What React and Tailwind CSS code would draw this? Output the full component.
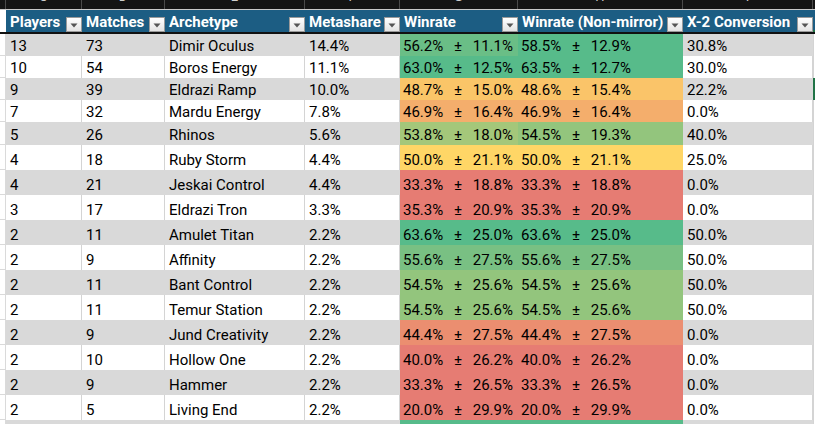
import React from 'react';

const rows = [
  { p: 13, m: 73, a: 'Dimir Oculus', s: '14.4%', w: [56.2, 11.1], n: [58.5, 12.9], x: '30.8%', h: 'h-[22px]' },
  { p: 10, m: 54, a: 'Boros Energy', s: '11.1%', w: [63.0, 12.5], n: [63.5, 12.7], x: '30.0%', h: 'h-[22px]' },
  { p: 9, m: 39, a: 'Eldrazi Ramp', s: '10.0%', w: [48.7, 15.0], n: [48.6, 15.4], x: '22.2%', h: 'h-[22px]', sel: true },
  { p: 7, m: 32, a: 'Mardu Energy', s: '7.8%', w: [46.9, 16.4], n: [46.9, 16.4], x: '0.0%', h: 'h-[22px]' },
  { p: 5, m: 26, a: 'Rhinos', s: '5.6%', w: [53.8, 18.0], n: [54.5, 19.3], x: '40.0%', h: 'h-[23px]' },
  { p: 4, m: 18, a: 'Ruby Storm', s: '4.4%', w: [50.0, 21.1], n: [50.0, 21.1], x: '25.0%', h: 'h-[25px]' },
  { p: 4, m: 21, a: 'Jeskai Control', s: '4.4%', w: [33.3, 18.8], n: [33.3, 18.8], x: '0.0%', h: 'h-[25px]' },
  { p: 3, m: 17, a: 'Eldrazi Tron', s: '3.3%', w: [35.3, 20.9], n: [35.3, 20.9], x: '0.0%', h: 'h-[25px]' },
  { p: 2, m: 11, a: 'Amulet Titan', s: '2.2%', w: [63.6, 25.0], n: [63.6, 25.0], x: '50.0%', h: 'h-[25px]' },
  { p: 2, m: 9, a: 'Affinity', s: '2.2%', w: [55.6, 27.5], n: [55.6, 27.5], x: '50.0%', h: 'h-[25px]' },
  { p: 2, m: 11, a: 'Bant Control', s: '2.2%', w: [54.5, 25.6], n: [54.5, 25.6], x: '50.0%', h: 'h-[25px]' },
  { p: 2, m: 11, a: 'Temur Station', s: '2.2%', w: [54.5, 25.6], n: [54.5, 25.6], x: '50.0%', h: 'h-[25px]' },
  { p: 2, m: 9, a: 'Jund Creativity', s: '2.2%', w: [44.4, 27.5], n: [44.4, 27.5], x: '0.0%', h: 'h-[25px]' },
  { p: 2, m: 10, a: 'Hollow One', s: '2.2%', w: [40.0, 26.2], n: [40.0, 26.2], x: '0.0%', h: 'h-[25px]' },
  { p: 2, m: 9, a: 'Hammer', s: '2.2%', w: [33.3, 26.5], n: [33.3, 26.5], x: '0.0%', h: 'h-[25px]' },
  { p: 2, m: 5, a: 'Living End', s: '2.2%', w: [20.0, 29.9], n: [20.0, 29.9], x: '0.0%', h: 'h-[25px]' },
  { p: '', m: '', a: '', s: '', w: [70, null], n: [70, null], x: '', h: 'h-[25px]' },
];

// google-sheets style scale: red / yellow / green around 50%
const RED = [230, 124, 115];
const YEL = [255, 214, 102];
const GRN = [87, 187, 138];
const scale = (v) => {
  const t = Math.max(-1, Math.min(1, (v - 50) / 7));
  const to = t < 0 ? RED : GRN;
  const k = Math.abs(t);
  return `rgb(${YEL.map((c, i) => Math.round(c + (to[i] - c) * k)).join(',')})`;
};

const Dropdown = () => (
  <div className="w-[16px] h-[15px] shrink-0 border border-[#9a9a9a] bg-gradient-to-b from-white to-[#e4e4e4] flex items-center justify-center">
    <svg width="8" height="5" viewBox="0 0 8 5" className="mt-[1px]">
      <path d="M0.5 0.5 L7.5 0.5 L4 4.5 Z" fill="#555" />
    </svg>
  </div>
);

const HeadCell = ({ w, label, last }) => (
  <div className={`${w} flex items-end justify-between pl-[4px] ${last ? 'pr-[1px]' : ''}`}>
    <span className="text-white font-bold text-[15px] leading-[17px] pb-[1px] whitespace-nowrap">{label}</span>
    <Dropdown />
  </div>
);

const Cell = ({ w, gray, children }) => (
  <div
    className={`${w} flex items-end pl-[4px] pb-[1px] leading-[17px] border-r ${
      gray ? 'border-[#d9d9d9]' : 'border-[#d4d4d4]'
    } whitespace-nowrap`}
  >
    {children}
  </div>
);

const Rate = ({ w, pair }) => (
  <div className={`${w} flex items-end pb-[1px] leading-[17px]`} style={{ backgroundColor: scale(pair[0]) }}>
    {pair[1] !== null && (
      <div className="flex w-[113px] pl-[3px]">
        <span className="w-[46px]">{pair[0].toFixed(1)}%</span>
        <span className="w-[18px] text-center">±</span>
        <span className="w-[46px] text-right">{pair[1].toFixed(1)}%</span>
      </div>
    )}
  </div>
);

const letters = [
  { w: 'w-[6px]', l: '' },
  { w: 'w-[76px]', l: 'C' },
  { w: 'w-[83px]', l: 'D' },
  { w: 'w-[140px]', l: 'E' },
  { w: 'w-[95px]', l: 'F' },
  { w: 'w-[118px]', l: 'G' },
  { w: 'w-[165px]', l: 'H' },
  { w: 'w-[130px]', l: 'I' },
];

export default function App() {
  return (
    <div className="w-[815px] h-[424px] overflow-hidden bg-white font-['Roboto',sans-serif] text-[15px] text-black">
      {/* column letters, mostly scrolled out of view */}
      <div className="flex h-[10px] bg-[#141414] border-b border-[#c8c8c8]">
        {letters.map((c, i) => (
          <div
            key={i}
            className={`${c.w} h-[9px] overflow-hidden flex items-end justify-center border-r border-[#4a4a4a]`}
          >
            <span className="text-[13px] leading-[13px] mb-[6px] text-[#cfcfcf]">{c.l}</span>
          </div>
        ))}
        <div className="flex-1" />
      </div>

      {/* table header */}
      <div className="flex h-[24px] border-b-2 border-[#111]">
        <div className="w-[6px] bg-white" />
        <div className="flex flex-1 bg-[#1c5d83]">
          <HeadCell w="w-[76px]" label="Players" />
          <HeadCell w="w-[83px]" label="Matches" />
          <HeadCell w="w-[140px]" label="Archetype" />
          <HeadCell w="w-[95px]" label="Metashare" />
          <HeadCell w="w-[118px]" label="Winrate" />
          <HeadCell w="w-[165px]" label="Winrate (Non-mirror)" />
          <HeadCell w="w-[130px]" label="X-2 Conversion" />
          <div className="flex-1 flex items-end">
            <div className="w-[2px] h-[2px] bg-[#217346]" />
          </div>
        </div>
      </div>

      {/* body */}
      {rows.map((r, i) => {
        const gray = i % 2 === 0;
        return (
          <div key={i} className={`flex ${r.h}`}>
            <div className="w-[6px] bg-white border-r border-b border-[#dadada]" />
            <div className={`flex flex-1 ${gray ? 'bg-[#d9d9d9]' : 'bg-white'}`}>
              <Cell w="w-[76px]" gray={gray}>{r.p}</Cell>
              <Cell w="w-[83px]" gray={gray}>{r.m}</Cell>
              <Cell w="w-[140px]" gray={gray}>{r.a}</Cell>
              <Cell w="w-[95px]" gray={gray}>{r.s}</Cell>
              <Rate w="w-[118px]" pair={r.w} />
              <Rate w="w-[165px]" pair={r.n} />
              <Cell w="w-[130px]" gray={gray}>{r.x}</Cell>
              <div
                className={`flex-1 bg-white ${
                  r.sel ? 'border-l-2 border-[#217346]' : 'border-l border-[#d4d4d4]'
                }`}
              />
            </div>
          </div>
        );
      })}
    </div>
  );
}
